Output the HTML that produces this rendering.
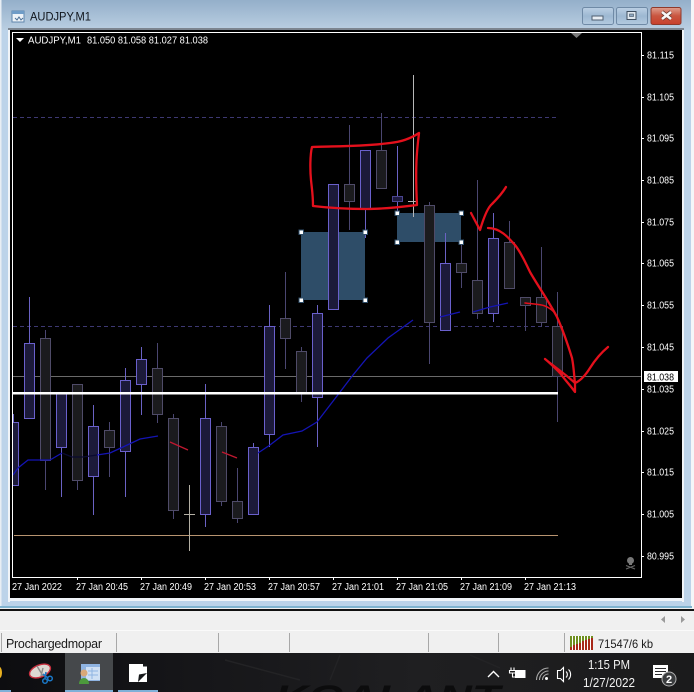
<!DOCTYPE html>
<html><head><meta charset="utf-8"><style>
html,body{margin:0;padding:0;background:#fff}
svg{display:block;font-family:"Liberation Sans",sans-serif}
.b{stroke:#6a60cc;fill:#1c1a3a}
.g{stroke:#4f4b68;fill:#1b1b1e}
.w1{stroke:#6a62c4;fill:none}
.w2{stroke:#4a4670;fill:none}
.r{fill:none;stroke:#e4101c;stroke-width:2.300;stroke-linecap:round;stroke-linejoin:round}
.h{fill:#fff;stroke:#2e4d68;stroke-width:1}
.p{fill:#fff;font-size:10px}
.t{fill:#fff;font-size:10px}
</style></head><body>
<svg width="694" height="692" viewBox="0 0 694 692" xmlns="http://www.w3.org/2000/svg">
<defs>
<linearGradient id="tg" x1="0" y1="0" x2="0" y2="1"><stop offset="0" stop-color="#94afca"/><stop offset="1" stop-color="#bacfe2"/></linearGradient>
<linearGradient id="bg" x1="0" y1="0" x2="0" y2="1"><stop offset="0" stop-color="#bcd0e4"/><stop offset=".5" stop-color="#9db8d2"/><stop offset="1" stop-color="#b4cadf"/></linearGradient>
<linearGradient id="cg" x1="0" y1="0" x2="0" y2="1"><stop offset="0" stop-color="#dfa090"/><stop offset=".5" stop-color="#c9553f"/><stop offset="1" stop-color="#c8402c"/></linearGradient>
<linearGradient id="tb" x1="0" y1="0" x2="1" y2="0"><stop offset="0" stop-color="#0d0d10"/><stop offset=".25" stop-color="#151518"/><stop offset=".6" stop-color="#1f1f21"/><stop offset="1" stop-color="#1b1b1c"/></linearGradient>
<clipPath id="pl"><rect x="13" y="33" width="628" height="544"/></clipPath>
<clipPath id="tc"><rect x="0" y="653" width="694" height="39"/></clipPath>
</defs>
<rect width="694" height="692" fill="#f0f0f0"/>
<!-- window frame -->
<rect x="0" y="0" width="692" height="30" fill="url(#tg)"/>
<rect x="0" y="30" width="692" height="577" fill="#bcd3e9"/>
<rect x="0" y="0" width="1.500" height="607" fill="#e8eef4"/>
<rect x="691" y="0" width="3" height="610" fill="#f4f6f8"/>
<rect x="0" y="606" width="692" height="2" fill="#7fb3cf"/>
<rect x="0" y="609" width="694" height="2" fill="#111"/>
<rect x="8" y="28" width="676" height="2" fill="#7c8590"/>
<rect x="8" y="30" width="2" height="572" fill="#f0f4f8"/>
<rect x="682" y="30" width="2" height="572" fill="#f0f4f8"/>
<rect x="8" y="598" width="676" height="3" fill="#f0f4f8"/>
<rect x="10" y="30" width="672" height="568" fill="#000"/>
<!-- title -->
<g>
<rect x="12" y="11" width="12" height="11" fill="#eef3f8" stroke="#5f86ad"/>
<rect x="12" y="11" width="12" height="3" fill="#6f9cc7"/>
<path d="M15 18l2 2 2-3 2 3 2-2" fill="none" stroke="#4a6f96"/>
<text x="30" y="20.500" font-size="11.500" fill="#10151c" textLength="61" lengthAdjust="spacingAndGlyphs">AUDJPY,M1</text>
</g>
<!-- window buttons -->
<rect x="582.500" y="7.500" width="31" height="17" rx="2" fill="url(#bg)" stroke="#6f8aa6"/>
<rect x="592" y="16" width="11" height="4" fill="#e8eef4" stroke="#4f5f70"/>
<rect x="616.500" y="7.500" width="31" height="17" rx="2" fill="url(#bg)" stroke="#6f8aa6"/>
<rect x="627" y="11.500" width="9" height="8" fill="#dfe8f0" stroke="#3f4f60"/>
<rect x="629.500" y="14" width="4" height="2.500" fill="#8fa8c0" stroke="#3f4f60" stroke-width=".6"/>
<rect x="651" y="7.500" width="30" height="17" rx="2" fill="url(#cg)" stroke="#8f3a2c"/>
<path d="M662 12l9 7M671 12l-9 7" stroke="#6a3a30" stroke-width="4"/>
<path d="M662 12l9 7M671 12l-9 7" stroke="#f8f8f8" stroke-width="2.600"/>
<!-- plot -->
<path d="M12.500 32.500H641.500V577.500H12.500Z" fill="none" stroke="#fff"/>
<path d="M16 38h8l-4 4z" fill="#fff"/>
<text x="28" y="43.500" font-size="10" fill="#fff" textLength="53" lengthAdjust="spacingAndGlyphs">AUDJPY,M1</text>
<text x="87" y="43.500" font-size="10" fill="#fff" textLength="121" lengthAdjust="spacingAndGlyphs">81.050 81.058 81.027 81.038</text>
<path d="M571 33h11l-5.500 5z" fill="#7a7a7a"/>
<g clip-path="url(#pl)">
<path d="M13 117.500H558M13 326.500H558" stroke="#3d3872" stroke-dasharray="4 3"/>
<path d="M13 376.500H641" stroke="#6a6a6a"/>
<path d="M14 535.500H558" stroke="#b89470"/>
<rect x="301" y="232" width="64" height="68" fill="#2e4d68"/>
<rect x="397" y="213" width="64" height="29" fill="#2e4d68"/>
<!-- wicks blue -->
<path class="w1" d="M13.500 414V486M29.500 297V343M61.500 447V497M93.500 405V426M93.500 476V515M125.500 368V380M125.500 451V497M141.500 347V359M141.500 384V415M205.500 384V418M205.500 514V527M253.500 443V447M269.500 305V326M269.500 434V447M317.500 305V313M317.500 397V447M365.500 208V238M397.500 146V196M397.500 201V214M445.500 233V263M493.500 213V238M493.500 313V322"/>
<!-- wicks gray -->
<path class="w2" d="M45.500 330V338M45.500 460V490M77.500 480V490M109.500 422V430M109.500 447V477M157.500 343V368M157.500 414V423M173.500 414V418M173.500 510V519M221.500 422V426M221.500 501V506M237.500 468V501M237.500 519V523M285.500 272V318M285.500 338V369M301.500 347V351M301.500 393V402M349.500 125V184M349.500 202V230M381.500 113V150M429.500 202V205M429.500 322V364M461.500 241V263M461.500 273V288M477.500 180V280M477.500 313V319M509.500 221V242M525.500 305V331M541.500 247V297M541.500 322V327M557.500 292V326M557.500 376V422"/>
<!-- bodies -->
<rect class="b" x="8.500" y="422.500" width="10" height="63"/>
<rect class="b" x="24.500" y="343.500" width="10" height="75"/>
<rect class="g" x="40.500" y="338.500" width="10" height="122"/>
<rect class="b" x="56.500" y="393.500" width="10" height="54"/>
<rect class="g" x="72.500" y="384.500" width="10" height="96"/>
<rect class="b" x="88.500" y="426.500" width="10" height="50"/>
<rect class="g" x="104.500" y="430.500" width="10" height="17"/>
<rect class="b" x="120.500" y="380.500" width="10" height="71"/>
<rect class="b" x="136.500" y="359.500" width="10" height="25"/>
<rect class="g" x="152.500" y="368.500" width="10" height="46"/>
<rect class="g" x="168.500" y="418.500" width="10" height="92"/>
<rect class="b" x="200.500" y="418.500" width="10" height="96"/>
<rect class="g" x="216.500" y="426.500" width="10" height="75"/>
<rect class="g" x="232.500" y="501.500" width="10" height="17"/>
<rect class="b" x="248.500" y="447.500" width="10" height="67"/>
<rect class="b" x="264.500" y="326.500" width="10" height="108"/>
<rect class="g" x="280.500" y="318.500" width="10" height="20"/>
<rect class="g" x="296.500" y="351.500" width="10" height="42"/>
<rect class="b" x="312.500" y="313.500" width="10" height="84"/>
<rect class="b" x="328.500" y="184.500" width="10" height="125"/>
<rect class="g" x="344.500" y="184.500" width="10" height="17"/>
<rect class="b" x="360.500" y="150.500" width="10" height="58"/>
<rect class="g" x="376.500" y="150.500" width="10" height="38"/>
<rect x="392.500" y="196.500" width="10" height="5" fill="#1e1b40" stroke="#4a4590"/>
<rect class="g" x="424.500" y="205.500" width="10" height="117"/>
<rect class="b" x="440.500" y="263.500" width="10" height="67"/>
<rect class="g" x="456.500" y="263.500" width="10" height="9"/>
<rect class="g" x="472.500" y="280.500" width="10" height="33"/>
<rect class="b" x="488.500" y="238.500" width="10" height="75"/>
<rect class="g" x="504.500" y="242.500" width="10" height="46"/>
<rect class="g" x="520.500" y="297.500" width="10" height="8"/>
<rect class="g" x="536.500" y="297.500" width="10" height="25"/>
<rect class="g" x="552.500" y="326.500" width="10" height="50"/>
<!-- crosses -->
<path d="M189.500 485V551M184 514.500H195" stroke="#b4b0a4" fill="none"/>
<path d="M413.500 75V217M408 201.500H418" stroke="#b8b8b8" fill="none"/>
<!-- EMA -->
<path d="M13 475L18 468 28 460 50 460 62 453" fill="none" stroke="#1414b4" stroke-width="1.300"/>
<path d="M62 453L72 457 83 457 97 455" fill="none" stroke="#0a0a30" stroke-width="1.300"/>
<path d="M97 455L110 453 123 447 140 439 158 436" fill="none" stroke="#1414b4" stroke-width="1.300"/>
<path d="M170 442L188 450M222 452L237 458" fill="none" stroke="#c01830" stroke-width="1.300"/>
<path d="M258 453L270 445 283 435 302 431 317 422 337 396 353 375 367 358 388 338 413 320" fill="none" stroke="#1414b4" stroke-width="1.300"/>
<path d="M440 317L460 312 M473 312L490 307 508 303" fill="none" stroke="#1414b4" stroke-width="1.300"/>
<!-- white line -->
<rect x="13" y="392" width="545" height="2.500" fill="#fff"/>
<!-- handles -->
<rect class="h" x="299" y="230" width="4.500" height="4.500"/>
<rect class="h" x="363" y="230" width="4.500" height="4.500"/>
<rect class="h" x="299" y="298" width="4.500" height="4.500"/>
<rect class="h" x="363" y="298" width="4.500" height="4.500"/>
<rect class="h" x="395" y="211" width="4.500" height="4.500"/>
<rect class="h" x="459" y="211" width="4.500" height="4.500"/>
<rect class="h" x="395" y="240" width="4.500" height="4.500"/>
<rect class="h" x="459" y="240" width="4.500" height="4.500"/>
<!-- skull -->
<circle cx="630.500" cy="560.500" r="3.500" fill="#777"/>
<rect x="629" y="563" width="3" height="2" fill="#777"/>
<path d="M626 565.500l9 3.500M635 565.500l-9 3.500" stroke="#666" stroke-width="1.200"/>
</g>
<!-- annotations -->
<path class="r" d="M312 147C330 146 360 147 390 143C400 142 410 139 419 133C417 150 415 165 417 205C400 207 385 209 367 209C350 209 330 208 313 206C313 195 312 190 311 180C310 170 310 155 312 147Z"/>
<path class="r" d="M471 213L480 230C483 220 487 208 492 204C497 199 503 192 506 187"/>
<path class="r" d="M488 228C500 228 508 237 515 245C522 254 525 262 530 272C538 286 548 300 557 317C562 328 568 345 572 358C574 368 574 376 575 383L575 392C570 385 565 380 560 373C555 368 550 363 545 359C552 365 564 373 575 383C580 381 585 376 590 368C595 360 602 352 608 347"/>
<path class="r" style="stroke-width:1.500" d="M525 303C532 304 540 304 545 306C552 309 556 313 558 320"/>
<!-- price axis -->
<path d="M641 55.500h3M641 97.500h3M641 138.500h3M641 180.500h3M641 222.500h3M641 263.500h3M641 305.500h3M641 347.500h3M641 389.500h3M641 431.500h3M641 472.500h3M641 514.500h3M641 556.500h3" stroke="#fff"/>
<g class="p">
<text x="647" y="58.500" textLength="27" lengthAdjust="spacingAndGlyphs">81.115</text>
<text x="647" y="100.500" textLength="27" lengthAdjust="spacingAndGlyphs">81.105</text>
<text x="647" y="141.500" textLength="27" lengthAdjust="spacingAndGlyphs">81.095</text>
<text x="647" y="183.500" textLength="27" lengthAdjust="spacingAndGlyphs">81.085</text>
<text x="647" y="225.500" textLength="27" lengthAdjust="spacingAndGlyphs">81.075</text>
<text x="647" y="266.500" textLength="27" lengthAdjust="spacingAndGlyphs">81.065</text>
<text x="647" y="308.500" textLength="27" lengthAdjust="spacingAndGlyphs">81.055</text>
<text x="647" y="350.500" textLength="27" lengthAdjust="spacingAndGlyphs">81.045</text>
<text x="647" y="392.500" textLength="27" lengthAdjust="spacingAndGlyphs">81.035</text>
<text x="647" y="434.500" textLength="27" lengthAdjust="spacingAndGlyphs">81.025</text>
<text x="647" y="475.500" textLength="27" lengthAdjust="spacingAndGlyphs">81.015</text>
<text x="647" y="517.500" textLength="27" lengthAdjust="spacingAndGlyphs">81.005</text>
<text x="647" y="559.500" textLength="27" lengthAdjust="spacingAndGlyphs">80.995</text>
</g>
<rect x="644" y="371" width="34" height="11" fill="#fff"/>
<text x="647" y="380.500" font-size="10" fill="#000" textLength="27" lengthAdjust="spacingAndGlyphs">81.038</text>
<!-- time axis -->
<path d="M77.500 577v3M141.500 577v3M205.500 577v3M269.500 577v3M333.500 577v3M397.500 577v3M461.500 577v3M525.500 577v3" stroke="#fff"/>
<g class="t">
<text x="12" y="590" textLength="50" lengthAdjust="spacingAndGlyphs">27 Jan 2022</text>
<text x="76" y="590" textLength="52" lengthAdjust="spacingAndGlyphs">27 Jan 20:45</text>
<text x="140" y="590" textLength="52" lengthAdjust="spacingAndGlyphs">27 Jan 20:49</text>
<text x="204" y="590" textLength="52" lengthAdjust="spacingAndGlyphs">27 Jan 20:53</text>
<text x="268" y="590" textLength="52" lengthAdjust="spacingAndGlyphs">27 Jan 20:57</text>
<text x="332" y="590" textLength="52" lengthAdjust="spacingAndGlyphs">27 Jan 21:01</text>
<text x="396" y="590" textLength="52" lengthAdjust="spacingAndGlyphs">27 Jan 21:05</text>
<text x="460" y="590" textLength="52" lengthAdjust="spacingAndGlyphs">27 Jan 21:09</text>
<text x="524" y="590" textLength="52" lengthAdjust="spacingAndGlyphs">27 Jan 21:13</text>
</g>
<!-- lower panel -->
<rect x="0" y="611" width="694" height="19" fill="#f0f0f0"/>
<rect x="0" y="630" width="694" height="1" fill="#fafafa"/>
<path d="M665 616v7l-4-3.500zM681 616v7l4-3.500z" fill="#9a9a9a"/>
<!-- status bar -->
<path d="M1.500 633v19M116.500 633v19M218.500 633v19M289.500 633v19M428.500 633v19M498.500 633v19M564.500 633v19" stroke="#a8a8a8"/>
<text x="6" y="648" font-size="12.500" fill="#1a1a1a" textLength="96" lengthAdjust="spacing">Prochargedmopar</text>
<g>
<rect x="570" y="636" width="23" height="14" fill="#fff"/>
<path d="M570 650V636h2v14zM573 650V636h2v14zM576 650V636h2v14zM579 650V636h2v14zM582 650V636h2v14zM585 650V636h2v14zM588 650V636h2v14zM591 650V636h2v14z" fill="#6f8f20"/>
<path d="M570 650v-3h2v3zM573 650v-5h2v5zM576 650v-6h2v6zM579 650v-7h2v7zM582 650v-9h2v9zM585 650v-10h2v10zM588 650v-11h2v11zM591 650v-12h2v12z" fill="#a82818"/>
</g>
<text x="598" y="648" font-size="12" fill="#1a1a1a" textLength="55" lengthAdjust="spacingAndGlyphs">71547/6 kb</text>
<!-- taskbar -->
<rect x="0" y="653" width="694" height="39" fill="url(#tb)"/>
<g clip-path="url(#tc)">
<path d="M225 660L300 680M330 680L340 655M470 655L500 668" fill="none" stroke="#232325" stroke-width="1.500"/>
<text x="275" y="708" font-size="32" font-weight="bold" font-style="italic" fill="#0c0c0d" textLength="225" lengthAdjust="spacingAndGlyphs">KGALANT</text>
</g>
<rect x="65" y="653" width="48" height="39" fill="#45484b"/>
<rect x="0" y="690" width="11" height="2" fill="#7fb0d8"/>
<rect x="65" y="690" width="48" height="2" fill="#7fb0d8"/>
<rect x="118" y="690" width="40" height="2" fill="#7fb0d8"/>
<path d="M0 667a2.500 6 0 0 1 2 6 2.500 6 0 0 1-2 5z" fill="#e8b020"/>
<!-- snipping icon -->
<ellipse cx="40" cy="671" rx="11" ry="6" transform="rotate(-22 40 671)" fill="#ddd8d2" stroke="#c83040" stroke-width="1.400"/>
<path d="M37 666l6 10M43 668l-2 8" stroke="#8a8a8a" stroke-width="1.400"/>
<path d="M43 674l5 4M46 672l-1 6" stroke="#1a78c8" stroke-width="1.600"/>
<circle cx="45" cy="681" r="2.300" fill="none" stroke="#1a78c8" stroke-width="1.500"/>
<circle cx="50" cy="678.500" r="2.300" fill="none" stroke="#1a78c8" stroke-width="1.500"/>
<!-- MT4 icon -->
<rect x="81" y="664" width="19" height="17" fill="#8fb4e2"/>
<rect x="86" y="667" width="14" height="13" fill="#cfe0f4"/>
<path d="M88 671h10M88 675h10M92 668v11" stroke="#8fb4e2"/>
<circle cx="84" cy="673" r="3.500" fill="#d8a878"/>
<path d="M79 684c0-8 10-8 10 0z" fill="#4c9a3c"/>
<!-- white box -->
<rect x="129" y="664" width="18" height="18" fill="#fff"/>
<path d="M147 673L138 682 139 674.500z" fill="#16181b"/>
<path d="M143 664h4v2.500h-4z" fill="#16181b"/>
<!-- tray -->
<path d="M488 677l5.500-5.500 5.500 5.500" fill="none" stroke="#fff" stroke-width="1.400"/>
<rect x="515.500" y="670.500" width="9.500" height="7" fill="#fff" stroke="#fff"/>
<path d="M511 667.500v3M514 667.500v3M509.500 670.500h6v2.500h-6zM512.500 673v4h3" stroke="#fff" fill="none" stroke-width="1.100"/>
<path d="M536.500 680a12 12 0 0 1 12-12M539.500 680a9 9 0 0 1 9-9M542.500 680a6 6 0 0 1 6-6" fill="none" stroke="#a8a8a8" stroke-width="1.100"/>
<circle cx="546.500" cy="678.500" r="1.500" fill="#fff"/>
<path d="M557.500 670.500h3l3-3v14l-3-3h-3z" fill="none" stroke="#fff" stroke-width="1.100"/>
<path d="M566 671.500a4 4 0 0 1 0 6M568.500 669.500a7 7 0 0 1 0 10" fill="none" stroke="#fff" stroke-width="1.100"/>
<text x="588" y="669" font-size="13" fill="#f2f2f2" textLength="42" lengthAdjust="spacingAndGlyphs">1:15 PM</text>
<text x="583" y="687" font-size="13" fill="#f2f2f2" textLength="52" lengthAdjust="spacingAndGlyphs">1/27/2022</text>
<path d="M653 665h15v13h-15z" fill="#fff"/>
<path d="M655 668.500h11M655 671.500h11M655 674.500h7" stroke="#2a2a2c"/>
<circle cx="669" cy="679" r="7" fill="#3a3c3e" stroke="#b0b0b0"/>
<text x="669" y="683" font-size="11" font-weight="bold" fill="#fff" text-anchor="middle">2</text>
</svg>
</body></html>
